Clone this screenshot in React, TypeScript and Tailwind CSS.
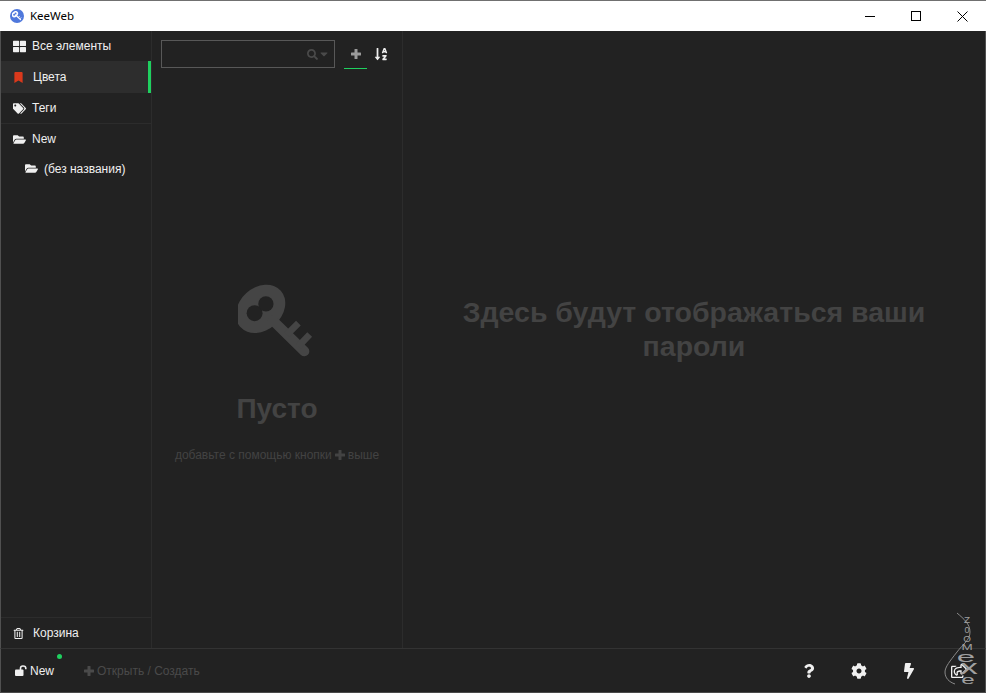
import React from 'react';
import { FaThLarge, FaBookmark, FaTags, FaFolderOpen, FaRegTrashAlt, FaSearch, FaCaretDown, FaSortAlphaDown, FaQuestion, FaCog, FaBolt, FaRegShareSquare } from 'react-icons/fa';

// Left menu rows
const menuItem = 'flex items-center text-[12px] text-[#f0f0f0]';
const footerIcon = 'w-[50px] flex justify-center';

// Old style key with the double hole in the bow
const KeyIcon: React.FC<{ size: number; color: string; hole: string }> = ({ size, color, hole }) => (
  <svg width={size} height={size * 0.957} viewBox="230 40 235 225">
    <ellipse cx="298" cy="115" rx="82" ry="64" transform="rotate(-42 298 115)" fill={color} />
    <circle cx="280" cy="128" r="24" fill={hole} />
    <circle cx="314" cy="100" r="23" fill={hole} />
    <path d="M335 150L430 243" stroke={color} strokeWidth="30" strokeLinecap="round" fill="none" />
    <path d="M378 192L412 158M412 228L446 192" stroke={color} strokeWidth="20" fill="none" />
  </svg>
);

// Thick plus
const PlusIcon: React.FC<{ size: number; color: string }> = ({ size, color }) => (
  <svg width={size} height={size} viewBox="0 0 10 10" fill={color}>
    <rect x="3.5" y="0" width="3" height="10" rx="0.5" />
    <rect x="0" y="3.5" width="10" height="3" rx="0.5" />
  </svg>
);

// Open padlock
const UnlockIcon: React.FC = () => (
  <svg width="12" height="11" viewBox="0 0 12 11">
    <rect x="0" y="4.5" width="8.5" height="6.5" rx="1" fill="#f0f0f0" />
    <path d="M5.5 5V3.2C5.5 1.8 6.6 1 8 1S10.8 1.8 10.8 3.2V4.2" stroke="#f0f0f0" strokeWidth="1.6" fill="none" />
  </svg>
);

// Watermark that sits over the bottom right corner
const Watermark: React.FC = () => (
  <svg className="absolute right-0 bottom-0 pointer-events-none" width="46" height="83" viewBox="940 610 46 83" fontFamily="Liberation Sans, Arial, sans-serif" fill="#a0a0a0" textAnchor="middle">
    <path d="M957 613C964 619 970 624 970 632C970 640 963 644 957 652C950 661 945 667 945 672C945 678 949 682 955 684" stroke="#8a8a8a" fill="none" />
    <text transform="translate(967 623) scale(1.1 1.1)" fontSize="9">Z</text>
    <text transform="translate(967 632.5) scale(1 1.1)" fontSize="9">0</text>
    <text transform="translate(967 641.5) scale(1.1 1.05)" fontSize="9">O</text>
    <text transform="translate(967 650) scale(1.5 1.05)" fontSize="9">M</text>
    <text transform="translate(966 662) scale(3 1.4)" fontSize="11">e</text>
    <text transform="translate(969 674) scale(3.2 1.9)" fontSize="11">x</text>
    <text transform="translate(968 684) scale(2.2 1.2)" fontSize="11">e</text>
  </svg>
);

const App: React.FC = () => {
  return (
    <div className="relative h-[693px] w-[986px] flex flex-col overflow-hidden bg-[#222222] font-['Liberation_Sans',Arial,sans-serif]">
      {/* Title bar */}
      <div className="h-[31px] shrink-0 bg-white border-t border-[#707070] flex items-center justify-between">
        <div className="flex items-center pl-[10px] gap-[6px]">
          <div className="w-[14px] h-[14px] rounded-full bg-[#4f78dc] flex items-center justify-center">
            <KeyIcon size={10} color="#ffffff" hole="#4f78dc" />
          </div>
          <span className="text-[11.5px] text-black font-['Noto_Sans',sans-serif]">KeeWeb</span>
        </div>
        <div className="flex items-center pr-px">
          <div className="w-[46px] flex justify-center">
            <div className="w-[10px] h-px bg-black" />
          </div>
          <div className="w-[46px] flex justify-center">
            <div className="w-[10px] h-[10px] border border-black" />
          </div>
          <div className="w-[46px] flex justify-center">
            <svg width="11" height="11" viewBox="0 0 11 11" stroke="black" strokeWidth="1"><path d="M0.5 0.5L10.5 10.5M10.5 0.5L0.5 10.5" /></svg>
          </div>
        </div>
      </div>

      <div className="flex-1 flex min-h-0 border-l border-r border-[#505050]">
        {/* Menu */}
        <div className="w-[151px] shrink-0 flex flex-col border-r border-[#2c2c2c]">
          <div className={`${menuItem} h-[30px] pl-[12px] gap-[6px]`}>
            <FaThLarge className="text-[13px]" />
            <span>Все элементы</span>
          </div>
          <div className={`${menuItem} h-[32px] pl-[12px] gap-[9px] bg-[#2d2d2d] border-r-[3px] border-[#1fd05f]`}>
            <FaBookmark className="text-[11px] text-[#d9391c]" />
            <span>Цвета</span>
          </div>
          <div className={`${menuItem} h-[31px] pl-[12px] gap-[6px] border-b border-[#2c2c2c]`}>
            <FaTags className="text-[13px]" />
            <span>Теги</span>
          </div>
          <div className={`${menuItem} h-[30px] pl-[12px] gap-[6px]`}>
            <FaFolderOpen className="text-[13px]" />
            <span>New</span>
          </div>
          <div className={`${menuItem} h-[29px] pl-[24px] gap-[6px]`}>
            <FaFolderOpen className="text-[13px]" />
            <span>(без названия)</span>
          </div>
          <div className="flex-1" />
          <div className={`${menuItem} h-[31px] pl-[12px] gap-[9px] border-t border-[#2c2c2c]`}>
            <FaRegTrashAlt className="text-[11px]" />
            <span>Корзина</span>
          </div>
        </div>

        {/* List */}
        <div className="w-[251px] shrink-0 flex flex-col border-r border-[#2c2c2c]">
          <div className="flex items-start pt-[9px] pl-[9px]">
            <div className="w-[174px] h-[28px] border border-[#585858] flex items-center justify-end pr-[4px] text-[#4a4a4a]">
              <FaSearch className="text-[11px]" />
              <FaCaretDown className="text-[12px]" />
            </div>
            <div className="ml-[9px] w-[23px] h-[29px] flex items-center justify-center border-b border-[#1fd05f]">
              <PlusIcon size={10} color="#9a9a9a" />
            </div>
            <div className="ml-[2px] w-[23px] h-[28px] flex items-center justify-center">
              <FaSortAlphaDown className="text-[14px] text-[#eeeeee]" />
            </div>
          </div>
          <div className="flex-1 flex flex-col items-center pt-[215px] text-[#434343]">
            <KeyIcon size={78} color="#454545" hole="#222222" />
            <div className="mt-[34px] text-[28px] leading-[32px] font-bold">Пусто</div>
            <div className="mt-[21px] text-[12px] flex items-center gap-[3px]">
              <span>добавьте с помощью кнопки</span>
              <PlusIcon size={10} color="#434343" />
              <span>выше</span>
            </div>
          </div>
        </div>

        {/* Details */}
        <div className="flex-1 flex justify-center pt-[264px]">
          <div className="w-[500px] text-center text-[28.5px] leading-[34px] font-bold text-[#434343]">
            Здесь будут отображаться ваши пароли
          </div>
        </div>
      </div>

      {/* Footer */}
      <div className="h-[45px] shrink-0 flex items-center border-t border-t-[#333333] border-b border-b-[#4a4a4a] border-l border-r border-l-[#505050] border-r-[#505050] relative">
        <div className="flex items-center pl-[14px] text-[12px] text-[#f0f0f0] gap-[3px] relative">
          <UnlockIcon />
          <span>New</span>
          <div className="absolute top-[-8px] right-[-8px] w-[5px] h-[5px] rounded-full bg-[#1fd05f]" />
        </div>
        <div className="ml-[30px] flex items-center gap-[3px] text-[12px] text-[#4a4a4a]">
          <PlusIcon size={10} color="#4a4a4a" />
          <span>Открыть / Создать</span>
        </div>
        <div className="ml-auto flex items-center pr-px text-[#f0f0f0] text-[16px]">
          <div className={footerIcon}><FaQuestion className="text-[14px]" /></div>
          <div className={footerIcon}><FaCog /></div>
          <div className={footerIcon}><FaBolt /></div>
          <div className={footerIcon}><FaRegShareSquare /></div>
        </div>
      </div>
      <Watermark />
    </div>
  );
};

export default App;
